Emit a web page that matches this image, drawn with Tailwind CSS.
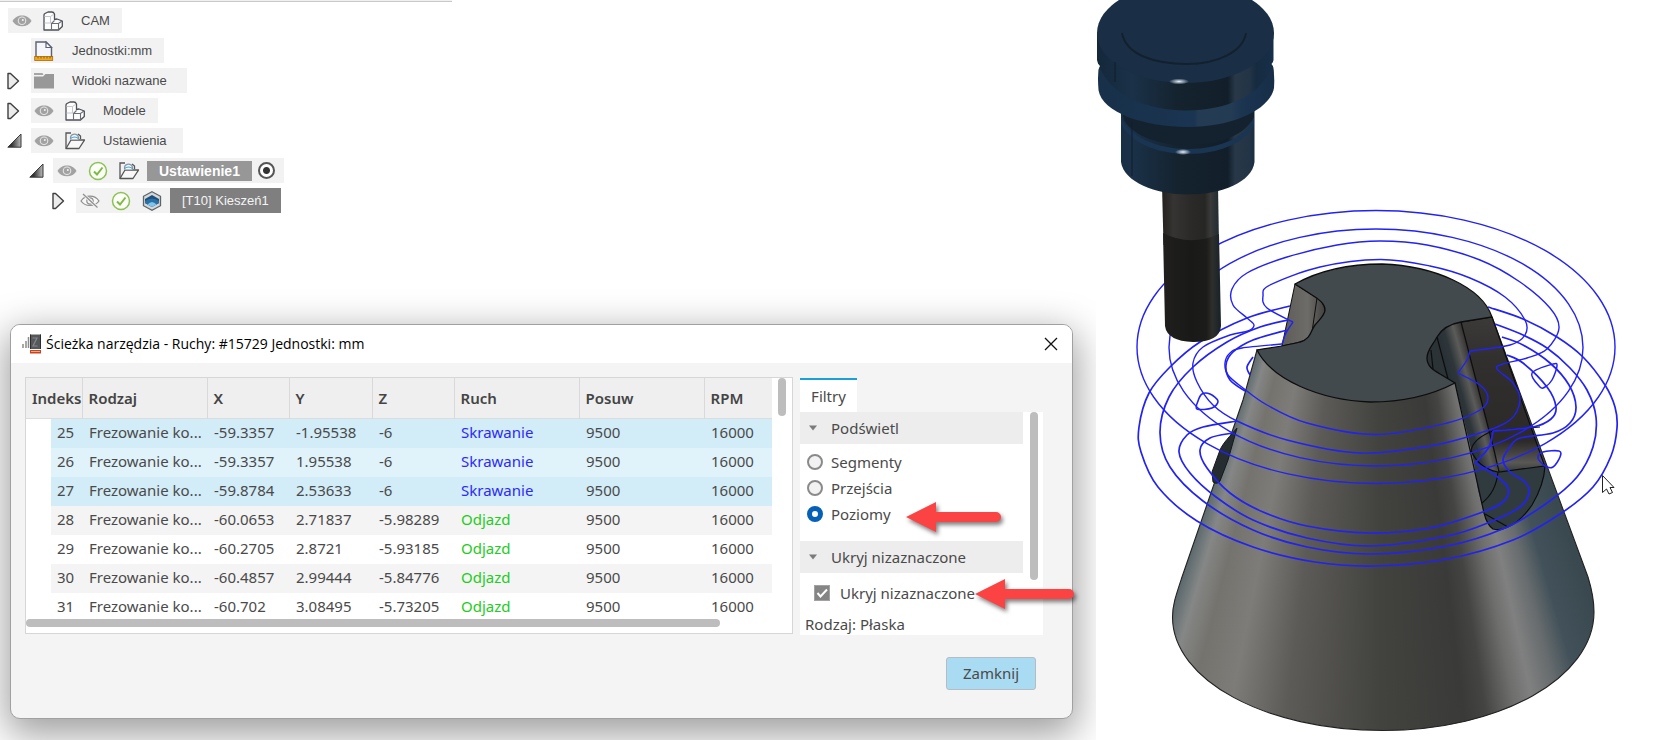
<!DOCTYPE html>
<html lang="pl">
<head>
    <meta charset="UTF-8">
    <meta name="viewport" content="width=device-width, initial-scale=1.0">
    <script src="https://cdn.jsdelivr.net/npm/@tailwindcss/browser@4"></script>
    <title>CAM - Ścieżka narzędzia</title>
</head>
<body class="bg-white text-[#4a4a4a]">

    <!-- shared icons -->
    <svg class="absolute size-0">
        <symbol id="eye" viewBox="0 0 20 20">
            <path d="M0.5 10C4 2.5 16 2.5 19.5 10C16 17 4 17 0.5 10Z" fill="#a2a2a2"/>
            <circle cx="10" cy="9.8" r="4.3" fill="#e4e4e4"/>
            <circle cx="10" cy="9.8" r="3.2" fill="#a2a2a2"/>
            <circle cx="10.8" cy="9" r="1" fill="#f2f2f2"/>
        </symbol>
        <symbol id="eye-off" viewBox="0 0 20 20">
            <path d="M1 10C5 3.500 15 3.500 19 10C15 16 5 16 1 10Z" fill="#f7f7f7" stroke="#8d8d8d" stroke-width="1.200"/>
            <circle cx="10" cy="10" r="3.200" fill="none" stroke="#8d8d8d" stroke-width="1.200"/>
            <path d="M3 3L17.500 16.500" stroke="#f2f2f2" stroke-width="3"/>
            <path d="M3 3L17.500 16.500" stroke="#8d8d8d" stroke-width="1.200"/>
        </symbol>
        <symbol id="part" viewBox="0 0 20 20">
            <path d="M1 19V4Q1 3 2 2.500L5 1H9Q10.500 1 11.500 3V8.500L14 8L19.300 10V15.500L15.500 19Z" fill="#fdfdfd" stroke="#4d5058" stroke-width="1.300" stroke-linejoin="round"/>
            <path d="M8.500 19V12.500L11.500 9.500M8.500 12.500H15.500L19 10M15.500 12.500V18.500" fill="none" stroke="#6b6e75" stroke-width="1.100"/>
            <path d="M1.500 5.500H7.500L11 3M7.500 5.500V12M1.500 12H8" fill="none" stroke="#c3c6cc"/>
        </symbol>
        <symbol id="doc" viewBox="0 0 20 20">
            <path d="M2 16V1H12L17.500 6.500V16" fill="#f4f6fa" stroke="#5a6170" stroke-width="1.400"/>
            <path d="M12 1V6.500H17.500Z" fill="#fff" stroke="#5a6170" stroke-width="1.200"/>
            <rect x="0.700" y="15.500" width="18" height="4" fill="#f1a91c" stroke="#a9690c" stroke-width="0.800"/>
            <path d="M4 15.500v2M7 15.500v2M10 15.500v2M13 15.500v2M16 15.500v2" stroke="#7a4b08" stroke-width="0.800"/>
        </symbol>
        <symbol id="folder" viewBox="0 0 20 20">
            <path d="M0 2H8.500L9.500 4H0Z" fill="#a5a5a5"/>
            <path d="M0 5.500H9L11.500 3H20V17.500H0Z" fill="#989898"/>
        </symbol>
        <symbol id="setup" viewBox="0 0 20 20">
            <path d="M1 17.500V2H6M13 3L15.500 5V8" fill="none" stroke="#555" stroke-width="1.300"/>
            <path d="M1 17.500L6 9H19.500L14 17.500Z" fill="#f8f8f8" stroke="#555" stroke-width="1.300" stroke-linejoin="round"/>
            <path d="M5.500 8.500V6A4.200 4.200 0 0 1 13.500 6V8.500" fill="#f4f8fb" stroke="#8a9aa5" stroke-width="1.100"/>
            <path d="M5.500 7.500Q9.500 4.500 13.500 7.500" fill="none" stroke="#3f9bd8" stroke-width="1.200"/>
        </symbol>
        <symbol id="check" viewBox="0 0 20 20">
            <circle cx="10" cy="10" r="8.500" fill="#fbfdf8" stroke="#8dc153" stroke-width="1.500"/>
            <path d="M6 10.500L9 13.500L14.500 6.500" fill="none" stroke="#7fb93f" stroke-width="2"/>
        </symbol>
        <symbol id="pocket" viewBox="0 0 20 20">
            <path d="M10 0.800L18.500 5.300V14.700L10 19.200L1.500 14.700V5.300Z" fill="#d5d7d9" stroke="#5f6468" stroke-width="1.300"/>
            <path d="M3 8L10 4L17 8V12L10 16L3 12Z" fill="#1d4f7d"/>
            <path d="M3 12V10Q10 5 17 10V12L10 16Z" fill="#2a6fa5"/>
            <path d="M5.500 13.500Q10 8.500 14.500 13.500L10 16Z" fill="#7fc4ea"/>
        </symbol>
        <symbol id="closed" viewBox="0 0 13 18">
            <path d="M1 1.500H3.500L11.500 9L3.500 16.500H1Z" fill="#ececec" stroke="#3f3f3f" stroke-width="1.400" stroke-linejoin="round"/>
        </symbol>
        <linearGradient id="openFill" x1="0" y1="0" x2="1" y2="0">
            <stop offset="0.300" stop-color="#333"/><stop offset="0.900" stop-color="#aaa"/>
        </linearGradient>
        <symbol id="open" viewBox="0 0 15 15">
            <path d="M0.800 14.200L14 1V14.200Z" fill="url(#openFill)" stroke="#3a3a3a" stroke-width="1"/>
        </symbol>
    </svg>

    <div class="flex h-screen overflow-hidden">
        <div class="w-[1096px] shrink-0 flex flex-col overflow-hidden pb-[21px]">
            <div class="w-[452px] h-[2px] bg-[#f0f0f0] border-b border-[#c9c9c9]"></div>

            <!-- browser tree -->
            <ul class="flex flex-col gap-[5px] mt-[6px] font-['Liberation_Sans',sans-serif] text-[13px]">
                <li class="flex pl-2">
                    <div class="flex items-center h-[25px] bg-[#f2f2f2] pl-1 pr-3">
                        <svg class="size-5 mr-[11px]"><use href="#eye"/></svg>
                        <svg class="size-5 mr-[18px]"><use href="#part"/></svg>
                        <span>CAM</span>
                    </div>
                </li>
                <li class="flex pl-[31px]">
                    <div class="flex items-center h-[25px] bg-[#f2f2f2] pl-[3px] pr-3">
                        <svg class="size-5 mr-[18px]"><use href="#doc"/></svg>
                        <span>Jednostki:mm</span>
                    </div>
                </li>
                <li class="flex items-center pl-[7px]">
                    <button class="w-6" aria-label="Rozwiń"><svg class="w-[13px] h-[18px]"><use href="#closed"/></svg></button>
                    <div class="flex items-center h-[25px] bg-[#f2f2f2] pl-[3px] pr-5">
                        <svg class="size-5 mr-[18px]"><use href="#folder"/></svg>
                        <span>Widoki nazwane</span>
                    </div>
                </li>
                <li class="flex items-center pl-[7px]">
                    <button class="w-6" aria-label="Rozwiń"><svg class="w-[13px] h-[18px]"><use href="#closed"/></svg></button>
                    <div class="flex items-center h-[25px] bg-[#f2f2f2] pl-[3px] pr-3">
                        <svg class="size-5 mr-[11px]"><use href="#eye"/></svg>
                        <svg class="size-5 mr-[18px]"><use href="#part"/></svg>
                        <span>Modele</span>
                    </div>
                </li>
                <li class="flex items-center pl-[7px]">
                    <button class="w-6" aria-label="Zwiń"><svg class="size-[15px]"><use href="#open"/></svg></button>
                    <div class="flex items-center h-[25px] bg-[#f2f2f2] pl-[3px] pr-4">
                        <svg class="size-5 mr-[11px]"><use href="#eye"/></svg>
                        <svg class="size-5 mr-[18px]"><use href="#setup"/></svg>
                        <span>Ustawienia</span>
                    </div>
                </li>
                <li class="flex items-center pl-[29px]">
                    <button class="w-6" aria-label="Zwiń"><svg class="size-[15px]"><use href="#open"/></svg></button>
                    <div class="flex items-center h-[25px] bg-[#f2f2f2] pl-1 pr-[9px]">
                        <svg class="size-5 mr-[11px]"><use href="#eye"/></svg>
                        <svg class="size-5 mr-[11px]"><use href="#check"/></svg>
                        <svg class="size-5 mr-2"><use href="#setup"/></svg>
                        <span class="flex items-center h-5 px-[12px] bg-[#979797] text-white text-sm font-bold">Ustawienie1</span>
                        <input type="radio" checked aria-label="Aktywne ustawienie" class="appearance-none ml-[6px] size-[17px] rounded-full border-2 border-[#555] bg-[radial-gradient(circle,#333_3px,#fff_4px)]">
                    </div>
                </li>
                <li class="flex items-center pl-[52px]">
                    <button class="w-6" aria-label="Rozwiń"><svg class="w-[13px] h-[18px]"><use href="#closed"/></svg></button>
                    <div class="flex items-center h-[25px] bg-[#f2f2f2] pl-1">
                        <svg class="size-5 mr-[11px]"><use href="#eye-off"/></svg>
                        <svg class="size-5 mr-[11px]"><use href="#check"/></svg>
                        <svg class="size-5 mr-2"><use href="#pocket"/></svg>
                        <span class="flex items-center h-full px-[12px] bg-[#7f7f7f] text-[#f5f5f5]">[T10] Kieszeń1</span>
                    </div>
                </li>
            </ul>

            <!-- toolpath dialog -->
            <section class="relative mt-auto ml-[10px] mr-[23px] rounded-[10px] border border-[#a0a0a0] bg-[#f4f4f4] shadow-[0_12px_38px_4px_rgba(0,0,0,0.38)] font-['Noto_Sans',sans-serif] text-[15px]">
                <header class="flex items-center h-[38px] rounded-t-[9px] bg-white pl-[11px] pr-[14px] text-black">
                    <svg class="w-5 h-5 mr-1" viewBox="0 0 20 20">
                        <path d="M1 10v4M4 7v7M6.500 3v11" stroke="#8b8b8b" stroke-width="1.500"/>
                        <path d="M8 0.500H19V15H8Z" fill="#55585a"/>
                        <path d="M10.500 4H15L11 12H15.500" fill="none" stroke="#85888a" stroke-width="1.200"/>
                        <path d="M8.500 0.500V15M18.500 0.500V15" stroke="#2c2c2c" stroke-width="1"/>
                        <path d="M8 16H19V19.500H8Z" fill="#c64424"/>
                        <path d="M9 17.500H18" stroke="#f4a877" stroke-width="1"/>
                    </svg>
                    <h1 class="font-['Open_Sans',sans-serif] text-sm">Ścieżka narzędzia - Ruchy: #15729 Jednostki: mm</h1>
                    <button class="ml-auto" aria-label="Zamknij okno">
                        <svg class="size-[14px]" viewBox="0 0 14 14"><path d="M1 1L13 13M13 1L1 13" stroke="#111" stroke-width="1.300"/></svg>
                    </button>
                </header>

                <div class="flex gap-[7px] pt-[14px] pl-[14px] pr-[29px]">
                    <div class="flex w-[768px] h-[257px] border border-[#d6d6d6] bg-white">
                        <div class="w-[746px] flex flex-col">
                            <div class="h-[241px] overflow-hidden">
                                <table class="table-fixed w-full border-collapse text-left">
                                    <colgroup>
                                        <col class="w-[25px]"><col class="w-[31px]"><col class="w-[125px]"><col class="w-[82px]"><col class="w-[83px]"><col class="w-[82px]"><col class="w-[125px]"><col class="w-[125px]"><col>
                                    </colgroup>
                                    <thead>
                                        <tr class="h-[40px] bg-[#efefef] border-b border-[#dcdcdc] text-[#444]">
                                            <th colspan="2" class="pl-[6px] font-semibold border-r border-[#d9d9d9] whitespace-nowrap">Indeks</th>
                                            <th class="pl-[6px] font-semibold border-r border-[#d9d9d9]">Rodzaj</th>
                                            <th class="pl-[6px] font-semibold border-r border-[#d9d9d9]">X</th>
                                            <th class="pl-[6px] font-semibold border-r border-[#d9d9d9]">Y</th>
                                            <th class="pl-[6px] font-semibold border-r border-[#d9d9d9]">Z</th>
                                            <th class="pl-[6px] font-semibold border-r border-[#d9d9d9]">Ruch</th>
                                            <th class="pl-[6px] font-semibold border-r border-[#d9d9d9]">Posuw</th>
                                            <th class="pl-[6px] font-semibold">RPM</th>
                                        </tr>
                                    </thead>
                                    <tbody id="moves"></tbody>
                                </table>
                            </div>
                            <div class="h-2 w-[694px] rounded-full bg-[#bdbdbd]"></div>
                        </div>
                        <div class="ml-[6px] w-2 h-[38px] rounded-full bg-[#bdbdbd]"></div>
                    </div>

                    <aside class="flex-1 flex flex-col pt-px">
                        <button class="self-start h-[34px] w-[57px] bg-white border-t-2 border-[#1a9fdb]">Filtry</button>
                        <div class="flex-1 flex bg-white">
                            <div class="w-[223px]">
                                <h2 class="flex items-center h-8 pl-[9px] bg-[#ededed]">
                                    <svg class="w-2 h-[6px] mr-[14px]" viewBox="0 0 8 6"><path d="M0 0.500H8L4 5.500Z" fill="#7b7b7b"/></svg>
                                    Podświetl
                                </h2>
                                <div class="flex flex-col pt-[5px] pl-[7px] h-[97px]">
                                    <label class="flex items-center gap-2 h-[26px]"><input type="radio" name="level" class="appearance-none size-4 rounded-full border-2 border-[#8a8a8a] bg-[#f2f2f2] checked:border-[5px] checked:border-[#0560b8] checked:bg-white">Segmenty</label>
                                    <label class="flex items-center gap-2 h-[26px]"><input type="radio" name="level" class="appearance-none size-4 rounded-full border-2 border-[#8a8a8a] bg-[#f2f2f2] checked:border-[5px] checked:border-[#0560b8] checked:bg-white">Przejścia</label>
                                    <label class="flex items-center gap-2 h-[26px]"><input type="radio" name="level" checked class="appearance-none size-4 rounded-full border-2 border-[#8a8a8a] bg-[#f2f2f2] checked:border-[5px] checked:border-[#0560b8] checked:bg-white">Poziomy</label>
                                </div>
                                <h2 class="flex items-center h-8 pl-[9px] bg-[#ededed]">
                                    <svg class="w-2 h-[6px] mr-[14px]" viewBox="0 0 8 6"><path d="M0 0.500H8L4 5.500Z" fill="#7b7b7b"/></svg>
                                    Ukryj nizaznaczone
                                </h2>
                                <div class="flex items-center h-10 pl-[14px] gap-[10px]">
                                    <div class="grid size-4">
                                        <input id="hide" type="checkbox" checked class="appearance-none col-start-1 row-start-1 size-4 bg-[#858585] border border-[#a2a2a2]">
                                        <svg class="col-start-1 row-start-1 size-4 pointer-events-none" viewBox="0 0 16 16"><path d="M3.500 8L6.500 11.500L13 4.500" fill="none" stroke="#fff" stroke-width="2"/></svg>
                                    </div>
                                    <label for="hide">Ukryj nizaznaczone</label>
                                </div>
                                <p class="pl-[5px] leading-[22px]">Rodzaj: Płaska</p>
                            </div>
                            <div class="ml-[7px] w-2 h-[168px] rounded-full bg-[#bdbdbd]"></div>
                        </div>
                    </aside>
                </div>

                <footer class="flex justify-end pt-[22px] pr-[36px] pb-[28px]">
                    <button class="h-[33px] w-[90px] rounded-[3px] border border-[#b5bdc2] bg-[#a9dbf2]">Zamknij</button>
                </footer>

                <!-- callout arrows -->
                <svg class="absolute top-[176px] left-[895px] w-[97px] h-[32px] overflow-visible drop-shadow-[2px_3px_2px_rgba(0,0,0,0.5)]" viewBox="0 0 97 32">
                    <path d="M0 16L30 1V11H90A5 5 0 0 1 90 21H30V31Z" fill="#fb4343"/>
                </svg>
                <svg class="absolute top-[253px] left-[964px] w-[100px] h-[32px] overflow-visible drop-shadow-[2px_3px_2px_rgba(0,0,0,0.5)]" viewBox="0 0 100 32">
                    <path d="M0 16L30 1V11H94A5 5 0 0 1 94 21H30V31Z" fill="#fb4343"/>
                </svg>
            </section>
        </div>

        <!-- 3D viewport -->
        <main class="flex-1 min-w-0">
            <svg class="block w-full h-full" viewBox="1096 0 559 740" preserveAspectRatio="xMinYMin slice" role="img" aria-label="Podgląd obróbki">
                <defs>
                    <clipPath id="coneClip">
                        <path d="M1257 350L1300 343L1330 290L1380 275L1492 317L1588 577C1592 590 1594 600 1594 612C1594 678 1500 730.500 1383 730.500C1265 730.500 1172.500 680 1172.500 617C1172.500 605 1176 595 1182 577L1243 400Z"/>
                    </clipPath>
                    <linearGradient id="holder" gradientUnits="userSpaceOnUse" x1="1097" y1="0" x2="1274" y2="0">
                        <stop offset="0" stop-color="#14283b"/><stop offset="0.200" stop-color="#1a3148"/><stop offset="0.450" stop-color="#15232f"/><stop offset="0.740" stop-color="#121f2b"/><stop offset="0.780" stop-color="#283848"/><stop offset="0.860" stop-color="#233446"/><stop offset="0.900" stop-color="#162b40"/><stop offset="1" stop-color="#172f49"/>
                    </linearGradient>
                    <linearGradient id="flange" gradientUnits="userSpaceOnUse" x1="1097" y1="0" x2="1274" y2="0">
                        <stop offset="0" stop-color="#183049"/><stop offset="0.550" stop-color="#1a3552"/><stop offset="0.570" stop-color="#243b54"/><stop offset="0.760" stop-color="#243b54"/><stop offset="0.820" stop-color="#1b3450"/><stop offset="1" stop-color="#172e48"/>
                    </linearGradient>
                    <linearGradient id="shank" x1="0" y1="0" x2="1" y2="0">
                        <stop offset="0" stop-color="#24211f"/><stop offset="0.200" stop-color="#363432"/><stop offset="0.500" stop-color="#2b2a28"/><stop offset="0.750" stop-color="#262624"/><stop offset="0.850" stop-color="#3a3a38"/><stop offset="1" stop-color="#1f2c33"/>
                    </linearGradient>
                    <linearGradient id="cutter" x1="0" y1="0" x2="1" y2="0">
                        <stop offset="0" stop-color="#201f1e"/><stop offset="0.500" stop-color="#191918"/><stop offset="0.750" stop-color="#1c1c1b"/><stop offset="0.850" stop-color="#2e2e2d"/><stop offset="1" stop-color="#172128"/>
                    </linearGradient>
                    <linearGradient id="notch" x1="0" y1="0" x2="1" y2="0">
                        <stop offset="0" stop-color="#5d5c59"/><stop offset="0.600" stop-color="#6d6c69"/><stop offset="1" stop-color="#42413f"/>
                    </linearGradient>
                    <linearGradient id="fillet" gradientUnits="userSpaceOnUse" x1="1448" y1="378" x2="1484" y2="368">
                        <stop offset="0" stop-color="#263036"/><stop offset="0.250" stop-color="#2f363a"/><stop offset="0.500" stop-color="#5b5b59"/><stop offset="0.750" stop-color="#302f2e"/><stop offset="1" stop-color="#292827"/>
                    </linearGradient>
                    <linearGradient id="wall" x1="0" y1="0" x2="0" y2="1">
                        <stop offset="0" stop-color="#3c3a39"/><stop offset="0.300" stop-color="#302f2e"/><stop offset="0.800" stop-color="#2b2a29"/><stop offset="0.940" stop-color="#595855"/><stop offset="1" stop-color="#343a3c"/>
                    </linearGradient>
                    <radialGradient id="glint"><stop offset="0" stop-color="#e6f0fa"/><stop offset="1" stop-color="#e6f0fa" stop-opacity="0"/></radialGradient>
                </defs>

                <!-- cone -->
                <g clip-path="url(#coneClip)">
                    <foreignObject x="1160" y="240" width="440" height="500">
                        <div class="w-[440px] h-[500px] bg-[conic-gradient(from_0deg_at_215px_-250px,#3a4950_160.600deg,#43525a_163.800deg,#666b6d_165.500deg,#808080_167.500deg,#6e6e6d_169deg,#444442_171.300deg,#3a3a38_173deg,#42423f_179.500deg,#5c5b58_187deg,#7d7c78_191.400deg,#75736e_194.500deg,#858786_196.600deg,#5d6a6e_198.100deg)]"></div>
                    </foreignObject>
                </g>
                <path d="M1257 350L1243 400L1182 577C1176 595 1172.500 605 1172.500 617C1172.500 680 1265 730.500 1383 730.500C1500 730.500 1594 678 1594 612C1594 600 1592 590 1588 577L1492 317" fill="none" stroke="#222" stroke-width="1.100"/>

                <!-- left slot -->
                <path d="M1237 428C1230 436 1223 443 1220 450L1212 472L1213 482Q1217 485 1220 481L1228 460Z" fill="#262d30" stroke="#15181a"/>

                <!-- right pocket -->
                <path d="M1492 317L1461 322L1494 450L1499 472L1545 466Z" fill="url(#wall)"/>
                <path d="M1461 322Q1444 325 1437 337L1427 360L1433 370L1455 383L1476 470L1498 472L1494 450Z" fill="url(#fillet)"/>
                <path d="M1437 337Q1428 348 1427 358Q1427 366 1433 370L1448 379Z" fill="#2b3336"/>
                <path d="M1472 450L1477 463Q1488 470 1498 472L1545 466Q1544 485 1532 505Q1521 521 1508 527Q1500 531 1493 529Q1487 525 1484 513L1478 490Z" fill="#303b40"/>
                <g fill="none" stroke="#0d0d0d" stroke-width="1.200">
                    <path d="M1492 317L1461 322L1494 450L1499 472L1545 466Q1544 485 1532 505Q1521 521 1508 527Q1500 531 1493 529Q1487 525 1484 513L1470 450L1455 383"/>
                    <path d="M1492 317L1545 467M1437 337L1448 379M1431 350L1433 369"/>
                    <path d="M1540 427L1493 431Q1474 438 1471 450Q1478 468 1498 472Q1496 492 1482 503M1485 514L1508 527"/>
                </g>

                <!-- top face -->
                <path d="M1295 284L1317 298Q1325 304 1325 310C1324 318 1316 325 1312 332Q1308 340 1300 342L1282 346Z" fill="url(#notch)" stroke="#0d0d0d"/>
                <path d="M1317 298L1312 332" stroke="#0d0d0d"/>
                <path d="M1295 284C1322 269 1355 264 1382 264C1435 266 1482 287 1492 317L1461 322Q1444 325 1437 337C1433 345 1427 350 1427 358C1427 366 1433 370 1440 374L1455 383C1430 396 1400 402 1370 402C1320 400 1272 380 1257 350C1275 347 1290 345 1300 342C1311 339 1311 330 1315 325C1320 319 1325 315 1325 310C1325 304 1320 300 1312 295Z" fill="#424a4d" stroke="#0d0d0d" stroke-width="1.300"/>

                <g id="toolpath" fill="none" stroke="#2222f5">
                    <ellipse cx="1376" cy="347" rx="239" ry="136.500" stroke-width="1.400"/>
                    <ellipse cx="1376" cy="347.500" rx="207" ry="118.500" stroke-width="1.400"/>
                </g>

                <!-- tool -->
                <path d="M1162 185L1163.500 245H1219L1218 185Z" fill="url(#shank)"/>
                <path d="M1163 233Q1190 247 1219 234L1221 326Q1220 342 1193 342Q1167 341 1165 326Z" fill="url(#cutter)"/>
                <path d="M1121 110V162C1124 182 1155 194.500 1188 194.500C1222 194.500 1252 182 1254.500 162V110Z" fill="url(#holder)"/>
                <path d="M1121 118C1130 137 1158 149 1188 149C1220 149 1248 137 1254 116V124C1247 142 1220 154 1188 154C1156 154 1130 142 1121 124Z" fill="#1a3552"/>
                <path d="M1121 105L1124 120C1134 137 1160 145 1188 145C1220 145 1245 135 1254 117V105Z" fill="#14222f"/>
                <path d="M1100 60Q1097 72 1098.500 90C1102 113 1145 127 1188 127C1232 127 1270 110 1274 88Q1275 72 1272 60Z" fill="url(#flange)"/>
                <path d="M1097 33V60Q1098 66 1101 70C1113 96 1148 110.500 1186 110.500C1228 110.500 1262 94 1271 68Q1273 64 1273.500 60V33Z" fill="url(#holder)"/>
                <path d="M1096.500 62L1100 66L1097.500 71ZM1274.500 60L1271.500 64L1275 69Z" fill="#fff"/>
                <ellipse cx="1185.500" cy="33" rx="88.500" ry="50" fill="#1a2f46"/>
                <path d="M1122 33C1126 55 1155 64 1187 64C1217 64 1243 52 1246 33" fill="none" stroke="#13212e" stroke-width="2"/>
                <path d="M1115 62V82M1132 122V176" stroke="#101d2a"/>
                <ellipse cx="1179" cy="81.500" rx="10" ry="3" fill="url(#glint)"/>
                <ellipse cx="1183" cy="152" rx="8" ry="3" fill="url(#glint)"/>

                <!-- mouse cursor -->
                <path d="M1602.500 475.500V492.500L1606.500 489L1609 494L1612.500 492.500L1610 487.500H1614Z" fill="#fff" stroke="#222" stroke-linejoin="round"/>
            </svg>
        </main>
    </div>

    <script>
      const moves = [
          [25, '-59.3357', '-1.95538', '-6', 'Skrawanie'],
          [26, '-59.3357', '1.95538', '-6', 'Skrawanie'],
          [27, '-59.8784', '2.53633', '-6', 'Skrawanie'],
          [28, '-60.0653', '2.71837', '-5.98289', 'Odjazd'],
          [29, '-60.2705', '2.8721', '-5.93185', 'Odjazd'],
          [30, '-60.4857', '2.99444', '-5.84776', 'Odjazd'],
          [31, '-60.702', '3.08495', '-5.73205', 'Odjazd'],
      ];

      document.getElementById('moves').innerHTML = moves.map(([index, x, y, z, type], i) => {
          const cut = type === 'Skrawanie';
          const bg = cut ? (i % 2 ? 'bg-[#e0f2fa]' : 'bg-[#d2ecf8]') : (i % 2 ? 'bg-[#f4f4f4]' : 'bg-white');
          const color = cut ? 'text-[#2a2aff]' : 'text-[#22cc22]';
          return `<tr class="h-[29px] leading-[26px]">
              <td></td>
              <td class="pl-[6px] pb-[3px] ${bg}">${index}</td>
              <td class="pl-[7px] pb-[3px] ${bg}">Frezowanie ko...</td>
              <td class="pl-[7px] pb-[3px] ${bg}">${x}</td>
              <td class="pl-[7px] pb-[3px] ${bg}">${y}</td>
              <td class="pl-[7px] pb-[3px] ${bg}">${z}</td>
              <td class="pl-[7px] pb-[3px] ${bg} ${color}">${type}</td>
              <td class="pl-[7px] pb-[3px] ${bg}">9500</td>
              <td class="pl-[7px] pb-[3px] ${bg}">16000</td>
          </tr>`;
      }).join('');

      // toolpath contours: w = line width, closed = loop, p = x,y pairs
      const contours = [
          { w: 1.4, closed: true, p: [1380,241, 1427,245, 1480,260, 1520,282, 1550,308, 1559,328, 1547,349, 1527,358, 1503,364, 1497,369, 1513,383, 1520,400, 1510,420, 1480,433, 1430,446, 1360,453, 1287,440, 1237,421, 1213,405, 1197,382, 1193,363, 1203,347, 1230,335, 1248,331, 1254,325, 1247,318, 1233,305, 1232,289, 1247,273, 1287,257, 1337,245] },
          { w: 1.4, closed: false, p: [1293,322, 1267,308, 1263,296, 1270,285, 1320,267, 1380,259.5, 1430,266, 1470,278, 1505,297, 1525,320, 1525,335, 1510,345, 1470,351] },
          { w: 1.4, closed: false, p: [1470,351, 1467,360, 1458,373] },
          { w: 1.4, closed: false, p: [1458,373, 1480,385, 1488,398, 1480,410, 1447,423, 1375,434.5, 1307,423, 1267,405, 1243,388, 1228,375, 1225,363, 1230,353, 1242,348, 1282,344] },
          { w: 1.4, closed: false, p: [1282,344, 1286,333, 1293,322] },
          { w: 1.7, closed: false, p: [1488,307, 1523,319, 1557,337, 1583,357, 1605,385, 1615,407, 1617,428, 1611,456, 1593,487, 1560,514, 1513,540, 1447,559, 1375,566, 1315,562, 1253,547, 1197,521, 1158,487, 1141,452, 1139,427, 1149,393, 1170,367, 1200,342, 1247,318, 1290,306] },
          { w: 1.7, closed: false, p: [1495,324, 1523,335, 1547,348, 1570,368, 1587,390, 1596,417, 1593,447, 1577,477, 1547,503, 1505,528, 1447,546, 1370,554, 1307,547, 1253,530, 1203,501, 1170,467, 1160,433, 1169,397, 1193,367, 1227,342, 1260,327, 1288,320] },
          { w: 1.7, closed: false, p: [1502,337, 1523,345, 1550,363, 1569,385, 1576,407, 1570,423, 1553,433, 1520,438, 1510,447, 1503,460, 1510,472, 1525,482, 1529,493, 1520,507, 1490,522, 1447,536, 1370,546, 1307,538, 1253,520, 1216,497, 1190,473, 1179,452, 1187,435, 1203,427, 1237,421] },
          { w: 1.7, closed: false, p: [1287,330, 1253,340, 1233,352, 1226,365, 1230,380, 1245,391] },
          { w: 1.7, closed: false, p: [1507,355, 1523,363, 1547,387, 1556,407, 1551,419, 1533,427, 1493,431] },
          { w: 1.7, closed: false, p: [1493,431, 1489,447, 1475,463] },
          { w: 1.7, closed: false, p: [1475,463, 1495,475, 1508,488, 1503,502, 1480,513, 1430,528, 1370,533, 1307,526, 1263,512, 1230,493, 1207,468, 1200,450, 1210,438, 1233,433] },
          { w: 1.7, closed: false, p: [1253,357, 1247,367, 1250,375] },
          { w: 1.6, closed: true, p: [1202,394, 1210,394, 1218,401, 1212,408, 1197,409, 1198,401] },
          { w: 1.5, closed: true, p: [1532,373, 1553,364, 1557,366, 1552,380, 1545,387, 1540,387] },
          { w: 1.6, closed: true, p: [1538,458, 1543,452, 1559,451, 1560,457, 1553,467, 1545,466] },
      ];

      // Catmull-Rom spline through the points
      function smoothPath(p, closed) {
          const n = p.length / 2;
          const at = (i) => {
              const k = closed ? (i + n) % n : Math.max(0, Math.min(n - 1, i));
              return [p[k * 2], p[k * 2 + 1]];
          };
          let d = `M${at(0)}`;
          for (let i = 0; i < (closed ? n : n - 1); i++) {
              const [a, b, c, e] = [at(i - 1), at(i), at(i + 1), at(i + 2)];
              d += `C${b[0] + (c[0] - a[0]) / 6} ${b[1] + (c[1] - a[1]) / 6} ${c[0] - (e[0] - b[0]) / 6} ${c[1] - (e[1] - b[1]) / 6} ${c[0]} ${c[1]}`;
          }
          return d;
      }

      const toolpath = document.getElementById('toolpath');
      contours.forEach(({ w, closed, p }) => {
          const path = document.createElementNS('http://www.w3.org/2000/svg', 'path');
          path.setAttribute('d', smoothPath(p, closed));
          path.setAttribute('stroke-width', w);
          toolpath.appendChild(path);
      });
    </script>
</body>
</html>
